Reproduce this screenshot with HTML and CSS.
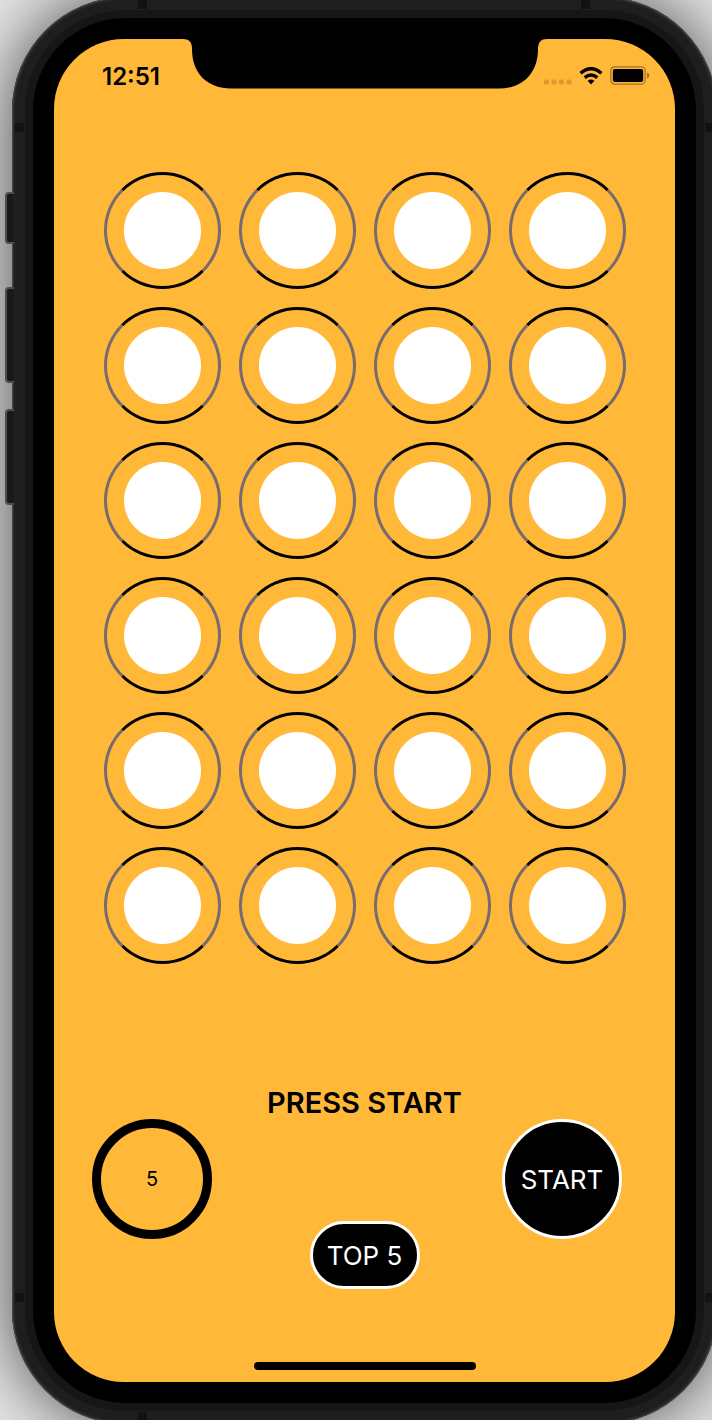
FILE: index.html
```html
<!DOCTYPE html>
<html lang="en">
<head>
<meta charset="utf-8">
<meta name="viewport" content="width=device-width, initial-scale=1">
<title>Press Start</title>
<link rel="stylesheet" href="styles.css">
</head>
<body>
<div class="phone">
  <span class="side-key side-key-mute"></span>
  <span class="side-key side-key-up"></span>
  <span class="side-key side-key-down"></span>
  <span class="band band-top band-start"></span>
  <span class="band band-top band-end"></span>
  <span class="band band-bottom band-start"></span>
  <span class="band band-left band-high"></span>
  <span class="band band-right band-high"></span>
  <span class="band band-left band-low"></span>
  <span class="band band-right band-low"></span>
  <div class="rim">
    <div class="bezel">
      <div class="screen">
        <header class="status">
          <time class="clock">12:51</time>
          <svg class="notch" viewBox="0 0 364 50" aria-hidden="true"><path d="M0 0C6 0 9 3 9 10C9 35 25 49.500 48 49.500H316C339 49.500 355 35 355 10C355 3 358 0 364 0Z"/></svg>
          <div class="indicators">
            <svg class="signal" viewBox="0 0 28 6" aria-hidden="true"><rect x="0" y="0.500" width="5" height="5" rx="1.500"/><rect x="7.500" y="0.500" width="5" height="5" rx="1.500"/><rect x="15" y="0.500" width="5" height="5" rx="1.500"/><rect x="22.500" y="0.500" width="5" height="5" rx="1.500"/></svg>
            <svg class="wifi" viewBox="0 0 24 18" aria-hidden="true"><path class="arc" d="M1.600 6.200Q12 -2.800 22.400 6.200"/><path class="arc" d="M5.700 10.600Q12 5.200 18.300 10.600"/><path d="M8.600 13.800Q12 11.400 15.400 13.800L12 17.500Z"/></svg>
            <svg class="battery" viewBox="0 0 40 19" aria-hidden="true"><rect class="case" x="0.800" y="0.800" width="34.400" height="17.400" rx="4"/><rect x="2.800" y="3" width="30.400" height="13" rx="2"/><path class="nub" d="M37 6.500Q39.300 7.500 39.300 9.500T37 12.500Z"/></svg>
          </div>
        </header>
        <main class="game">
          <div class="board">
            <button class="cell" aria-label="Cell 1"></button><button class="cell" aria-label="Cell 2"></button><button class="cell" aria-label="Cell 3"></button><button class="cell" aria-label="Cell 4"></button>
            <button class="cell" aria-label="Cell 5"></button><button class="cell" aria-label="Cell 6"></button><button class="cell" aria-label="Cell 7"></button><button class="cell" aria-label="Cell 8"></button>
            <button class="cell" aria-label="Cell 9"></button><button class="cell" aria-label="Cell 10"></button><button class="cell" aria-label="Cell 11"></button><button class="cell" aria-label="Cell 12"></button>
            <button class="cell" aria-label="Cell 13"></button><button class="cell" aria-label="Cell 14"></button><button class="cell" aria-label="Cell 15"></button><button class="cell" aria-label="Cell 16"></button>
            <button class="cell" aria-label="Cell 17"></button><button class="cell" aria-label="Cell 18"></button><button class="cell" aria-label="Cell 19"></button><button class="cell" aria-label="Cell 20"></button>
            <button class="cell" aria-label="Cell 21"></button><button class="cell" aria-label="Cell 22"></button><button class="cell" aria-label="Cell 23"></button><button class="cell" aria-label="Cell 24"></button>
          </div>
          <h1 class="message">PRESS START</h1>
          <div class="controls">
            <div class="timer">5</div>
            <button class="pill">TOP 5</button>
            <button class="start">START</button>
          </div>
        </main>
        <div class="home"></div>
      </div>
    </div>
  </div>
</div>
</body>
</html>
```
FILE: styles.css
```css
* {
  box-sizing: border-box;
}

body {
  margin: 0;
  overflow: hidden;
  background: #e6e6e6;
  font-family: Inter, "Liberation Sans", sans-serif;
  color: #000;
}

button {
  margin: 0;
  padding: 0;
  font-family: inherit;
}

.phone {
  position: relative;
  margin: -3px -5px -4px 12px;
  padding: 13px;
  border-radius: 114px;
  background: #1e1e1e;
  box-shadow: inset 0 0 0 1px #484a4a, inset 0 0 3px 2px #303131, 0 0 70px rgba(0, 0, 0, 0.7);
}

.rim {
  padding: 8px;
  border-radius: 100px;
  background: #161616;
}

.bezel {
  padding: 21px;
  border-radius: 92px;
  background: #000;
}

.screen {
  display: flex;
  flex-direction: column;
  min-height: 1343px;
  border-radius: 70px;
  background: #ffb838;
}

.side-key {
  position: absolute;
  left: -7px;
  width: 9px;
  border: 2px solid #4c4d4d;
  border-right: 0;
  border-radius: 4px 0 0 4px;
  background: #191919;
}

.side-key-mute {
  top: 195px;
  height: 52px;
}

.side-key-up {
  top: 290px;
  height: 96px;
}

.side-key-down {
  top: 412px;
  height: 96px;
}

.band {
  position: absolute;
  width: 9px;
  height: 9px;
  background: #121212;
}

.band-top {
  top: 3px;
}

.band-bottom {
  bottom: 3px;
}

.band-start {
  left: 126px;
}

.band-end {
  right: 127px;
}

.band-left {
  left: 3px;
}

.band-right {
  right: 3px;
}

.band-high {
  top: 126px;
}

.band-low {
  bottom: 122px;
}

.status {
  display: grid;
  grid-template-columns: minmax(0, 1fr) 364px minmax(0, 1fr);
}

.clock {
  padding: 23px 0 0 48px;
  font-size: 24px;
  line-height: 30px;
  font-weight: 600;
}

.notch {
  width: 364px;
  height: 50px;
}

.indicators {
  display: flex;
  justify-content: flex-end;
  align-items: flex-end;
  gap: 7px;
  height: 46px;
  padding-right: 25px;
}

.indicators svg {
  flex: none;
}

.signal {
  width: 28px;
  height: 6px;
  fill: #e8942c;
}

.wifi {
  width: 24px;
  height: 18px;
}

.arc {
  fill: none;
  stroke: #000;
  stroke-width: 3.4;
}

.battery {
  width: 40px;
  height: 19px;
}

.case {
  fill: none;
  stroke: #a86f20;
  stroke-width: 1.2;
}

.nub {
  fill: #a86f20;
}

.game {
  flex: 1;
  padding-top: 80px;
}

.board {
  display: grid;
  grid-template-columns: repeat(4, 117px);
  justify-content: center;
  gap: 18px;
}

.cell {
  width: 117px;
  height: 117px;
  border: 3px solid;
  border-color: #000 #776b70;
  border-radius: 50%;
  background: radial-gradient(circle at center, #fff 38px, transparent 39px);
}

.message {
  margin: 122px 0 0;
  font-size: 29px;
  line-height: 33px;
  font-weight: 600;
  text-align: center;
}

.controls {
  display: grid;
  grid-template-columns: 1fr auto 1fr;
  align-items: start;
  padding: 0 38px;
}

.timer,
.start {
  display: flex;
  align-items: center;
  justify-content: center;
  width: 120px;
  height: 120px;
  border-radius: 50%;
}

.timer {
  border: 9px solid #000;
  font-size: 20px;
}

.start,
.pill {
  border: 3px solid #fff;
  background: #000;
  color: #fff;
  font-size: 26px;
  font-weight: 400;
}

.start {
  justify-self: end;
  margin-right: 15px;
}

.pill {
  width: 110px;
  height: 68px;
  margin-top: 102px;
  border-radius: 34px;
}

.home {
  align-self: center;
  width: 222px;
  height: 8px;
  margin-bottom: 12px;
  border-radius: 4px;
  background: #000;
}
```
